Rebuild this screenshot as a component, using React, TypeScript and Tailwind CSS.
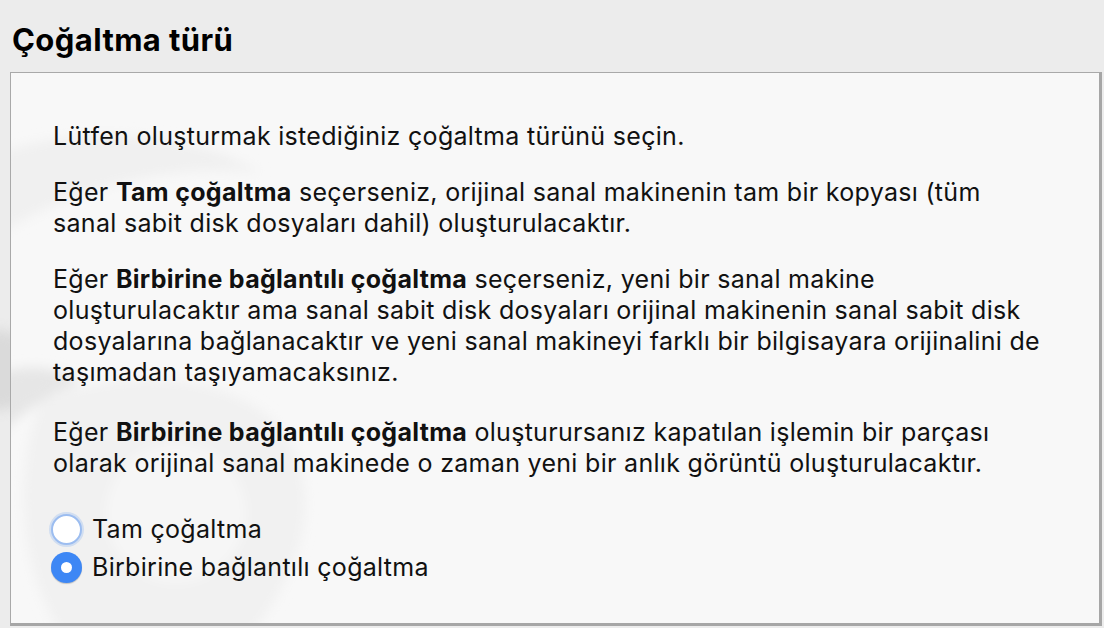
import React from "react";

// Clone type step of the clone wizard (Turkish locale).

function Radio({ checked, label }: { checked?: boolean; label: string }) {
  return (
    <label className="flex h-[38px] items-center gap-[10px]">
      {checked ? (
        <span className="flex h-[31px] w-[31px] items-center justify-center rounded-full bg-[#3d87f5] shadow-[0_1px_1px_rgba(0,0,0,0.2)]">
          <span className="h-[11px] w-[11px] rounded-full bg-white" />
        </span>
      ) : (
        <span className="h-[31px] w-[31px] rounded-full border-[2px] border-[#9cbdf0] bg-white shadow-[0_0_0_2px_rgba(150,185,240,0.35)]" />
      )}
      <span>{label}</span>
    </label>
  );
}

export default function App() {
  return (
    <div
      className="relative h-[628px] w-[1104px] overflow-hidden bg-[#ececec] text-[#111]"
      style={{ fontFamily: "Inter, 'Liberation Sans', sans-serif" }}
    >
      {/* watermark spilling past the panel edge */}
      <div className="absolute left-[-30px] top-[330px] h-[80px] w-[60px] rounded-full bg-[#dadada] blur-[6px]" />
      <h1 className="relative pl-[12px] pt-[22px] text-[31px] font-bold leading-[36px] tracking-[0.4px] text-black">
        Çoğaltma türü
      </h1>
      <div className="relative ml-[10px] mt-[14px] h-[554px] w-[1092px] overflow-hidden border-t border-l border-[#a9a9a9] border-r-[3px] border-b-[3px] border-r-[#a6a6a6] border-b-[#a6a6a6] bg-[#f8f8f8]">
        {/* faint logo watermark */}
        <svg className="absolute left-[-10px] top-[40px]" width="420" height="520" viewBox="0 0 420 520">
          <defs>
            <filter id="soft" x="-20%" y="-20%" width="140%" height="140%">
              <feGaussianBlur stdDeviation="6" />
            </filter>
          </defs>
          <g filter="url(#soft)">
            <path d="M0 40 C 80 10, 200 20, 260 60 C 180 50, 80 70, 0 120 Z" fill="#f0f0f0" />
            <path d="M40 290 C 120 250, 250 260, 290 330 C 320 390, 300 460, 250 520 L 60 520 C 20 460, 10 360, 40 290 Z" fill="#f1f1f1" />
            <circle cx="175" cy="400" r="70" fill="#f6f6f6" />
            <path d="M0 260 C 30 250, 60 255, 80 270 C 50 280, 20 300, 0 320 Z" fill="#e6e6e6" />
          </g>
        </svg>
        <div className="relative whitespace-nowrap px-[42px] pt-[48px] text-[25px] leading-[31px] tracking-[0.3px]">
          <p>Lütfen oluşturmak istediğiniz çoğaltma türünü seçin.</p>
          <p className="mt-[25px]">
            Eğer <b>Tam çoğaltma</b> seçerseniz, orijinal sanal makinenin tam bir kopyası (tüm
            <br />
            sanal sabit disk dosyaları dahil) oluşturulacaktır.
          </p>
          <p className="mt-[25px]">
            Eğer <b>Birbirine bağlantılı çoğaltma</b> seçerseniz, yeni bir sanal makine
            <br />
            oluşturulacaktır ama sanal sabit disk dosyaları orijinal makinenin sanal sabit disk
            <br />
            dosyalarına bağlanacaktır ve yeni sanal makineyi farklı bir bilgisayara orijinalini de
            <br />
            taşımadan taşıyamacaksınız.
          </p>
          <p className="mt-[29px]">
            Eğer <b>Birbirine bağlantılı çoğaltma</b> oluşturursanız kapatılan işlemin bir parçası
            <br />
            olarak orijinal sanal makinede o zaman yeni bir anlık görüntü oluşturulacaktır.
          </p>
          <div className="-ml-[2px] mt-[31px]">
            <Radio label="Tam çoğaltma" />
            <Radio checked label="Birbirine bağlantılı çoğaltma" />
          </div>
        </div>
      </div>
    </div>
  );
}
